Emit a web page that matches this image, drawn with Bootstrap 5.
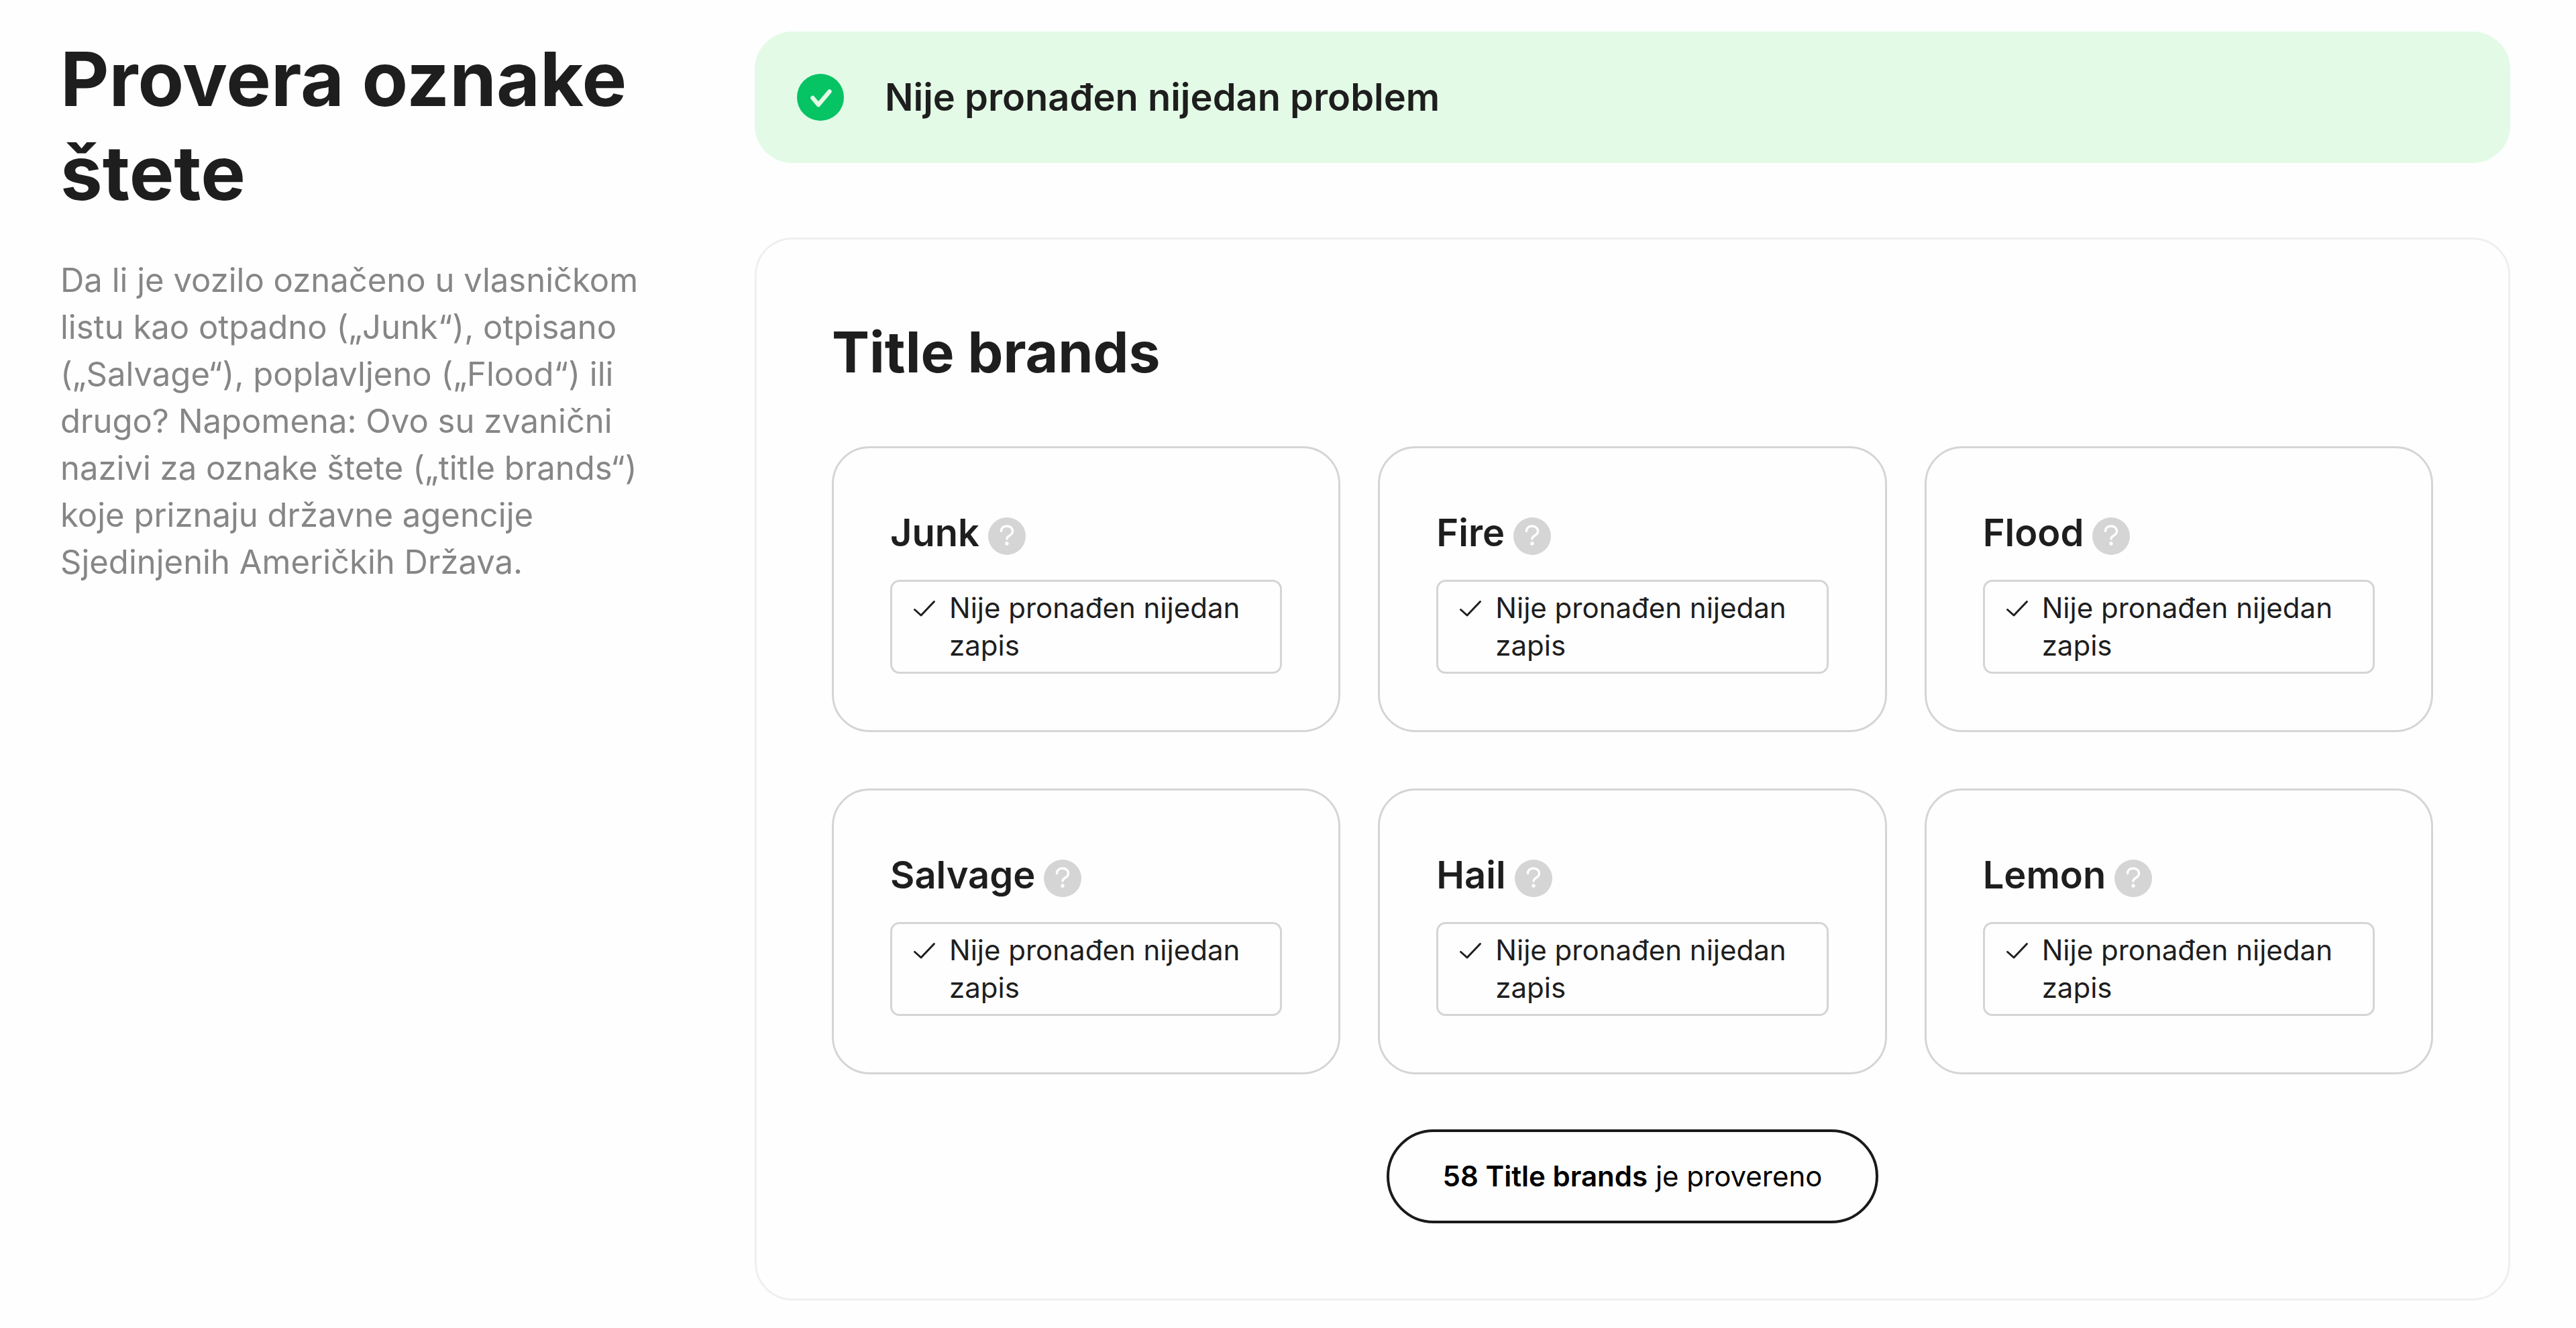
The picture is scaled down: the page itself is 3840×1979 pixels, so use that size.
<!DOCTYPE html>
<html lang="sr-Latn">
<head>
<meta charset="utf-8">
<meta name="viewport" content="width=device-width, initial-scale=1">
<title>Provera oznake štete</title>
<link href="https://cdn.jsdelivr.net/npm/bootstrap@5.3.0/dist/css/bootstrap.min.css" rel="stylesheet">
<style>
  body { font-family: Inter, "Liberation Sans", sans-serif; color: #1e1e1e; background: #fefefe; font-size: 42px; line-height: 56px; }
  .page { padding: 47px 98px 28px 90px; display: grid; grid-template-columns: minmax(0, 923fr) minmax(0, 2617fr); column-gap: 112px; }
  .page-title { font-size: 112px; line-height: 140px; font-weight: 700; margin-bottom: 56px; }
  .intro { font-size: 49px; line-height: 70px; color: #868686; }
  .status { background: #e3fbe6; border-radius: 56px; padding: 56px; margin-bottom: 111px; gap: 54px; font-size: 56px; line-height: 84px; font-weight: 600; }
  .status-icon { width: 84px; height: 84px; }
  .panel { border: 3px solid #efefef; border-radius: 56px; padding: 112px; }
  .panel-title { font-size: 84px; line-height: 112px; font-weight: 700; margin-bottom: 84px; }
  .brand-grid { --bs-gutter-x: 56px; --bs-gutter-y: 84px; margin-bottom: 82px; }
  .brand { border: 3px solid #d5d5d5; border-radius: 56px; padding: 84px; }
  .brand-name { font-size: 56px; line-height: 84px; font-weight: 600; margin-bottom: 28px; }
  .help { border: 0; padding: 0; background: none; width: 56px; height: 56px; margin-left: 13px; font-size: 56px; line-height: 56px; vertical-align: middle; }
  .help svg { width: 56px; height: 56px; display: block; }
  .result { border: 3px solid #d5d5d5; border-radius: 14px; padding: 11px 28px; gap: 15px; }
  .result-icon { width: 42px; height: 56px; }
  .summary { border: 4px solid #1a1a1a; border-radius: 70px; padding: 38px 80px; font-size: 42px; line-height: 56px; color: #000; }
  .summary strong { font-weight: 600; }
</style>
</head>
<body>
<svg class="d-none" aria-hidden="true">
  <symbol id="i-tick" viewBox="0 0 42 56"><path d="M5.500 30.500l9.500 8.500L34.500 18.500" fill="none" stroke="#1e1e1e" stroke-width="3" stroke-linecap="round" stroke-linejoin="round"/></symbol>
  <symbol id="i-help" viewBox="0 0 56 56"><circle cx="28" cy="28" r="28" fill="#d5d5d5"/><path d="M19.500 20.500c0-5 4-7.500 8.500-7.500s8.500 3 8.500 7.500c0 4-2.500 5.500-5 7-2.500 1.500-3.500 2.500-3.500 4.500" fill="none" stroke="#fff" stroke-width="3.400" stroke-linecap="round"/><circle cx="28" cy="39" r="2.700" fill="#fff"/></symbol>
</svg>
<main class="page">
  <header>
    <h1 class="page-title">Provera oznake štete</h1>
    <p class="intro mb-0">Da li je vozilo označeno u vlasničkom listu kao otpadno („Junk“), otpisano („Salvage“), poplavljeno („Flood“) ili drugo? Napomena: Ovo su zvanični nazivi za oznake štete („title brands“) koje priznaju državne agencije Sjedinjenih Američkih Država.</p>
  </header>
  <div>
    <div class="status d-flex align-items-center" role="status">
      <svg class="status-icon flex-shrink-0" viewBox="0 0 84 84" aria-hidden="true"><circle cx="42" cy="42" r="35" fill="#06c364"/><path d="M30.500 43l8.500 10L55.500 33.500" fill="none" stroke="#e3fbe6" stroke-width="6.500" stroke-linecap="round" stroke-linejoin="round"/></svg>
      <span>Nije pronađen nijedan problem</span>
    </div>
    <section class="panel">
      <h2 class="panel-title">Title brands</h2>
      <div class="row row-cols-3 brand-grid">
        <div class="col"><article class="brand"><h3 class="brand-name">Junk<button class="help" type="button" aria-label="Junk"><svg><use href="#i-help"/></svg></button></h3><div class="result d-flex align-items-start"><svg class="result-icon flex-shrink-0"><use href="#i-tick"/></svg><span>Nije pronađen nijedan zapis</span></div></article></div>
        <div class="col"><article class="brand"><h3 class="brand-name">Fire<button class="help" type="button" aria-label="Fire"><svg><use href="#i-help"/></svg></button></h3><div class="result d-flex align-items-start"><svg class="result-icon flex-shrink-0"><use href="#i-tick"/></svg><span>Nije pronađen nijedan zapis</span></div></article></div>
        <div class="col"><article class="brand"><h3 class="brand-name">Flood<button class="help" type="button" aria-label="Flood"><svg><use href="#i-help"/></svg></button></h3><div class="result d-flex align-items-start"><svg class="result-icon flex-shrink-0"><use href="#i-tick"/></svg><span>Nije pronađen nijedan zapis</span></div></article></div>
        <div class="col"><article class="brand"><h3 class="brand-name">Salvage<button class="help" type="button" aria-label="Salvage"><svg><use href="#i-help"/></svg></button></h3><div class="result d-flex align-items-start"><svg class="result-icon flex-shrink-0"><use href="#i-tick"/></svg><span>Nije pronađen nijedan zapis</span></div></article></div>
        <div class="col"><article class="brand"><h3 class="brand-name">Hail<button class="help" type="button" aria-label="Hail"><svg><use href="#i-help"/></svg></button></h3><div class="result d-flex align-items-start"><svg class="result-icon flex-shrink-0"><use href="#i-tick"/></svg><span>Nije pronađen nijedan zapis</span></div></article></div>
        <div class="col"><article class="brand"><h3 class="brand-name">Lemon<button class="help" type="button" aria-label="Lemon"><svg><use href="#i-help"/></svg></button></h3><div class="result d-flex align-items-start"><svg class="result-icon flex-shrink-0"><use href="#i-tick"/></svg><span>Nije pronađen nijedan zapis</span></div></article></div>
      </div>
      <div class="d-flex justify-content-center">
        <button class="btn summary" type="button"><strong>58 Title brands</strong> je provereno</button>
      </div>
    </section>
  </div>
</main>
<script src="https://cdn.jsdelivr.net/npm/bootstrap@5.3.0/dist/js/bootstrap.bundle.min.js"></script>
</body>
</html>
